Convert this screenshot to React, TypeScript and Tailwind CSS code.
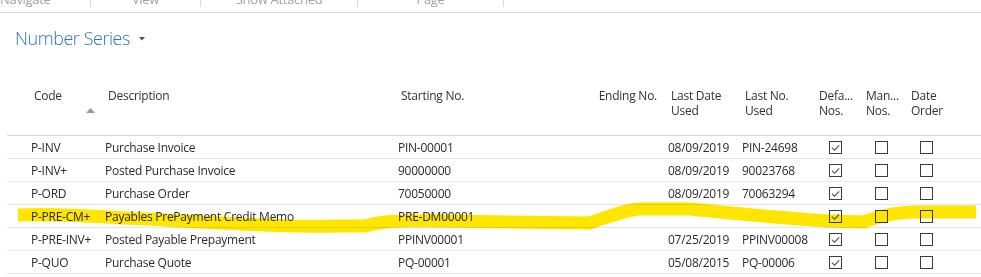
import React from 'react';

type Row = {
  code: string;
  desc: string;
  start: string;
  lastDate: string;
  lastNo: string;
  def: boolean;
  man: boolean;
  order: boolean;
};

const ROWS: Row[] = [
  { code: 'P-INV', desc: 'Purchase Invoice', start: 'PIN-00001', lastDate: '08/09/2019', lastNo: 'PIN-24698', def: true, man: false, order: false },
  { code: 'P-INV+', desc: 'Posted Purchase Invoice', start: '90000000', lastDate: '08/09/2019', lastNo: '90023768', def: true, man: false, order: false },
  { code: 'P-ORD', desc: 'Purchase Order', start: '70050000', lastDate: '08/09/2019', lastNo: '70063294', def: true, man: false, order: false },
  { code: 'P-PRE-CM+', desc: 'Payables PrePayment Credit Memo', start: 'PRE-DM00001', lastDate: '', lastNo: '', def: true, man: false, order: false },
  { code: 'P-PRE-INV+', desc: 'Posted Payable Prepayment', start: 'PPINV00001', lastDate: '07/25/2019', lastNo: 'PPINV00008', def: true, man: false, order: false },
  { code: 'P-QUO', desc: 'Purchase Quote', start: 'PQ-00001', lastDate: '05/08/2015', lastNo: 'PQ-00006', def: true, man: false, order: false },
];

const GRID = 'grid grid-cols-[24px_74px_293px_192px_78px_74px_74px_47px_45px_1fr]';

const Checkbox = ({ checked }: { checked: boolean }) => (
  <div className="w-[13px] h-[13px] border border-[#3c3c3c] bg-white flex items-center justify-center">
    {checked && (
      <svg width="11" height="11" viewBox="0 0 11 11">
        <path d="M1.8 5.6 L4.6 8.2 L9.2 3.4" fill="none" stroke="#555" strokeWidth="1.1" />
      </svg>
    )}
  </div>
);

const Sep = () => <div className="w-px h-[17px] bg-[#d6d6d6] shrink-0" />;

export default function App() {
  return (
    <div className="relative w-[981px] h-[277px] overflow-hidden bg-white font-['Open_Sans',sans-serif] text-[12px]">
      {/* action bar, scrolled off the top */}
      <div className="h-[13px] overflow-hidden border-b border-[#d9d9d9]">
        <div className="flex -mt-[10px] text-[13px] leading-[19px] text-[#a3a3a3] tracking-[-0.3px]">
          <div className="w-[90px]">Navigate</div>
          <Sep />
          <div className="w-[109px] text-center">View</div>
          <Sep />
          <div className="w-[156px] text-center">Show Attached</div>
          <Sep />
          <div className="w-[145px] text-center">Page</div>
          <Sep />
        </div>
      </div>

      {/* page title */}
      <div className="mt-[12px] ml-[15px] flex items-center h-[26px] text-[#2f74bd]">
        <span className="text-[18px] font-light tracking-[-0.45px]">Number Series</span>
        <svg className="ml-[9px] mt-[2px]" width="6" height="4" viewBox="0 0 6 4">
          <path d="M0 0 L6 0 L3 3.5 Z" fill="#555" />
        </svg>
      </div>

      {/* list */}
      <div className="ml-[7px] mt-[29px] text-[#2b2b2b] tracking-[-0.25px]">
        <div className={`${GRID} h-[56px] pt-[8px] leading-[15px] border-b border-[#d4d4d4] text-[#333]`}>
          <div />
          <div className="pl-[3px]">
            <div>Code</div>
            <svg className="ml-[52px] mt-[5px]" width="9" height="5" viewBox="0 0 9 5">
              <path d="M0 5 L4.5 0 L9 5 Z" fill="#9a9a9a" />
            </svg>
          </div>
          <div className="pl-[3px]">Description</div>
          <div className="pl-[3px]">Starting No.</div>
          <div className="pr-[11px] text-right whitespace-nowrap">Ending No.</div>
          <div className="pl-[3px]">Last Date<br />Used</div>
          <div className="pl-[3px]">Last No.<br />Used</div>
          <div className="pl-[3px]">Defa...<br />Nos.</div>
          <div className="pl-[3px]">Man...<br />Nos.</div>
          <div className="pl-[3px]">Date<br />Order</div>
        </div>

        {ROWS.map((r) => (
          <div key={r.code} className={`${GRID} h-[23px] pt-px items-center border-b border-[#e6e6e6]`}>
            <div />
            <div className="whitespace-nowrap">{r.code}</div>
            <div className="whitespace-nowrap">{r.desc}</div>
            <div>{r.start}</div>
            <div />
            <div>{r.lastDate}</div>
            <div>{r.lastNo}</div>
            <div className="pl-[13px]"><Checkbox checked={r.def} /></div>
            <div className="pl-[12px]"><Checkbox checked={r.man} /></div>
            <div className="pl-[12px]"><Checkbox checked={r.order} /></div>
          </div>
        ))}
      </div>

      {/* highlighter stroke drawn over the screenshot */}
      <svg className="absolute inset-0 pointer-events-none mix-blend-multiply" width="981" height="277" viewBox="0 0 981 277">
        <path
          d="M18 215 C 60 213 120 218 200 222 S 300 227 340 226 L 365 226 C 382 221 400 220 440 221 L 590 223 C 610 216 625 210 640 209 L 690 209 C 740 214 790 219 830 221 L 863 222 C 880 216 895 212 915 212 L 976 212"
          fill="none"
          stroke="#ffe600"
          strokeWidth="13"
          strokeLinejoin="round"
        />
      </svg>
    </div>
  );
}
